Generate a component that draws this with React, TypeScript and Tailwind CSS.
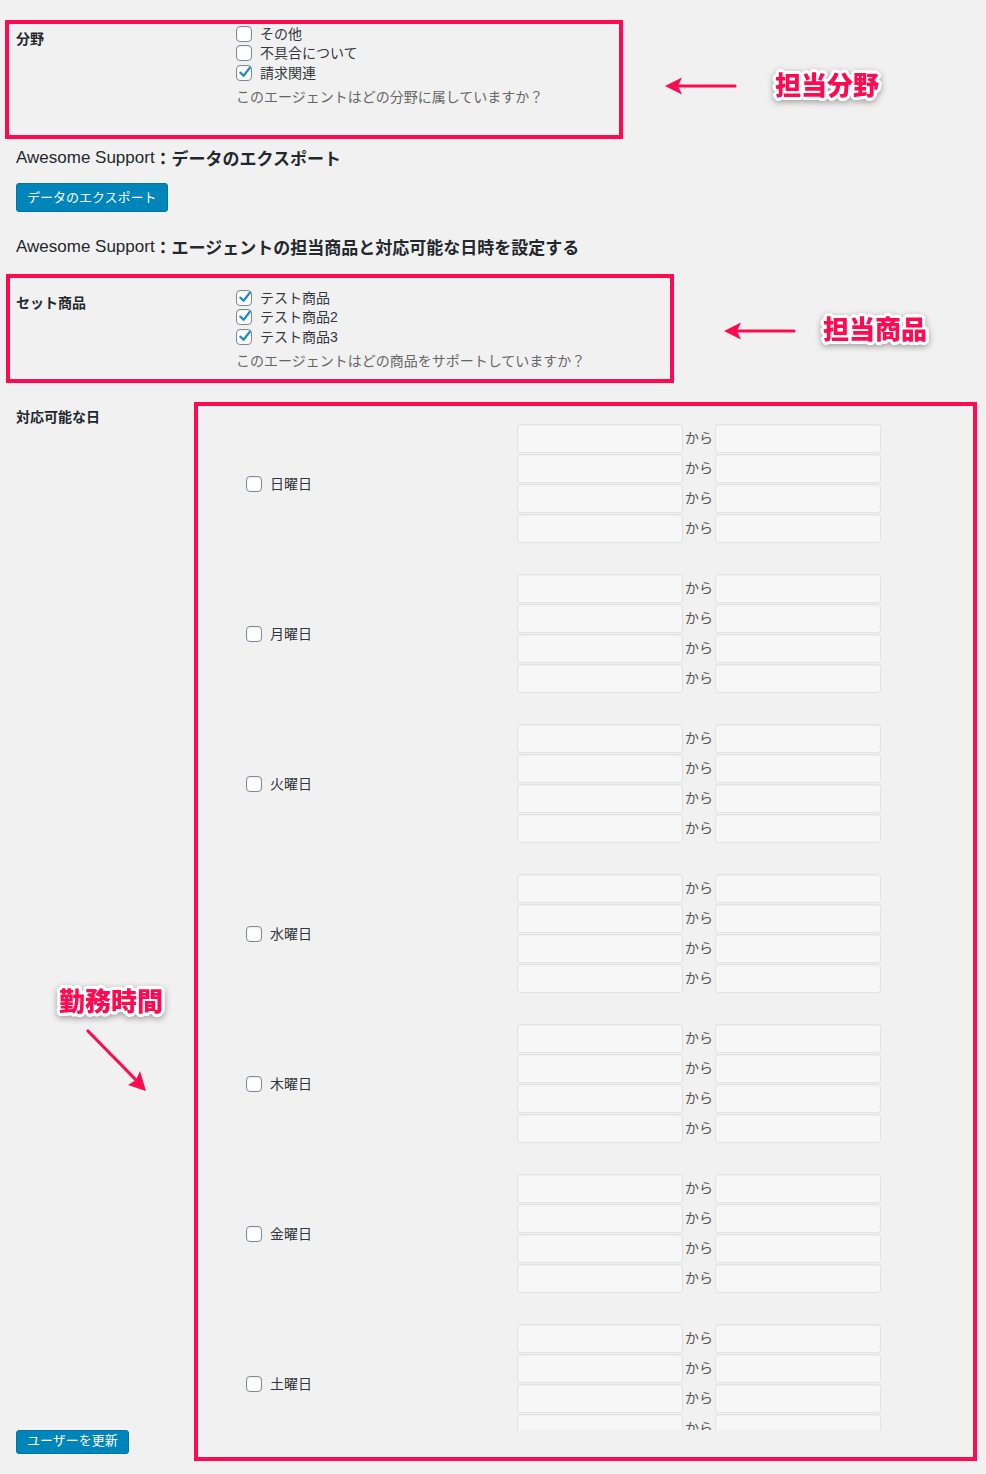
import React from "react";

const days = ["日曜日", "月曜日", "火曜日", "水曜日", "木曜日", "金曜日", "土曜日"];

function Check({ checked }: { checked?: boolean }) {
  return (
    <span className="relative inline-flex h-4 w-4 shrink-0 items-center justify-center rounded-[4px] border border-[#7e8993] bg-white shadow-[inset_0_1px_2px_rgba(0,0,0,0.08)]">
      {checked && (
        <svg viewBox="0 0 16 16" className="absolute left-[0px] top-[-2px] h-[16px] w-[16px]">
          <path
            d="M3.4 8.6 L6.6 11.8 L12.9 3.6"
            stroke="#1e8cbe"
            strokeWidth="2.3"
            fill="none"
            strokeLinecap="round"
            strokeLinejoin="round"
          />
        </svg>
      )}
    </span>
  );
}

function CheckRow({ label, checked }: { label: string; checked?: boolean }) {
  return (
    <div className="flex h-[19.5px] items-center gap-2 text-[14px] leading-5 text-[#32373c]">
      <Check checked={checked} />
      <span>{label}</span>
    </div>
  );
}

function TimeInput() {
  return (
    <div className="h-[29px] w-[166px] rounded-[3px] border border-[#e2e2e2] bg-[#f7f7f7] shadow-[inset_0_1px_2px_rgba(0,0,0,0.04)]" />
  );
}

function DayBlock({ day }: { day: string }) {
  return (
    <div className="mb-[30px] flex h-[120px] shrink-0">
      <div className="flex w-[319px] items-center gap-2 pl-[48px] text-[14px] leading-5 text-[#32373c]">
        <Check />
        <span>{day}</span>
      </div>
      <div className="flex flex-col">
        {[0, 1, 2, 3].map((i) => (
          <div key={i} className="flex h-[30px] items-start">
            <TimeInput />
            <span className="flex h-[29px] w-[32px] items-center justify-center text-[14px] text-[#555]">から</span>
            <TimeInput />
          </div>
        ))}
      </div>
    </div>
  );
}

const noteText =
  "absolute font-['Noto_Sans_CJK_JP',sans-serif] text-[26px] font-black leading-[32px] text-[#ff0a50] [text-shadow:3px_0_0_#fff,-3px_0_0_#fff,0_3px_0_#fff,0_-3px_0_#fff,2px_2px_0_#fff,-2px_2px_0_#fff,2px_-2px_0_#fff,-2px_-2px_0_#fff,3px_1px_0_#fff,-3px_1px_0_#fff,3px_-1px_0_#fff,-3px_-1px_0_#fff,1px_3px_0_#fff,-1px_3px_0_#fff,1px_-3px_0_#fff,-1px_-3px_0_#fff] drop-shadow-[0_2px_3px_rgba(0,0,0,0.35)]";

function LeftArrow({ className }: { className: string }) {
  return (
    <svg className={className} viewBox="0 0 74 22" width="74" height="22">
      <path d="M14 11 H71" stroke="#ff0a50" strokeWidth="3.2" strokeLinecap="round" />
      <path d="M1 11 L18 2.5 L14 11 L18 19.5 Z" fill="#ff0a50" />
    </svg>
  );
}

export default function App() {
  return (
    <div className="relative h-[1474px] w-[986px] overflow-hidden bg-[#f1f1f1] font-['Liberation_Sans','Noto_Sans_CJK_JP',sans-serif] text-[14px] text-[#23282d]">
      {/* 分野 */}
      <div className="ml-[5px] mt-[20px] h-[119px] w-[618px] border-4 border-[#ff0a50] pl-[7px]">
        <div className="flex">
          <div className="h-5 w-[220px] pt-[5px] text-[14px] font-bold leading-5">分野</div>
          <div className="flex flex-col">
            <CheckRow label="その他" />
            <CheckRow label="不具合について" />
            <CheckRow label="請求関連" checked />
            <div className="mt-[4px] h-5 text-[14px] leading-5 text-[#666]">
              このエージェントはどの分野に属していますか？
            </div>
          </div>
        </div>
      </div>

      <h2 className="ml-[16px] mt-[7px] flex h-[24px] items-center text-[17px] leading-6 text-[#23282d]">
        <span className="font-normal">Awesome Support</span>
        <span className="font-['Noto_Sans_CJK_JP',sans-serif] font-bold">：データのエクスポート</span>
      </h2>

      <button className="ml-[16px] mt-[13px] flex h-[29px] items-center rounded-[3px] border border-[#0073aa] bg-[#0085ba] px-[10px] text-[13px] leading-5 text-white">
        データのエクスポート
      </button>

      <h2 className="ml-[16px] mt-[23px] flex h-[24px] items-center text-[17px] leading-6 text-[#23282d]">
        <span className="font-normal">Awesome Support</span>
        <span className="font-['Noto_Sans_CJK_JP',sans-serif] font-bold">：エージェントの担当商品と対応可能な日時を設定する</span>
      </h2>

      {/* セット商品 */}
      <div className="ml-[6px] mt-[15px] h-[109px] w-[668px] border-4 border-[#ff0a50] pl-[6px] pt-[10px]">
        <div className="flex">
          <div className="h-5 w-[220px] pt-[5px] text-[14px] font-bold leading-5">セット商品</div>
          <div className="flex flex-col">
            <CheckRow label="テスト商品" checked />
            <CheckRow label="テスト商品2" checked />
            <CheckRow label="テスト商品3" checked />
            <div className="mt-[4px] h-5 text-[14px] leading-5 text-[#666]">
              このエージェントはどの商品をサポートしていますか？
            </div>
          </div>
        </div>
      </div>

      {/* 対応可能な日 */}
      <div className="mt-[19px] flex">
        <div className="ml-[16px] flex w-[178px] flex-col justify-between">
          <div className="mt-[5px] h-5 text-[14px] font-bold leading-5">対応可能な日</div>
          <button className="mb-[7px] flex h-[24px] w-fit items-start rounded-[3px] border border-[#0073aa] bg-[#0085ba] px-[10px] pt-[1px] text-[13px] leading-[18px] text-white">
            ユーザーを更新
          </button>
        </div>
        <div className="h-[1059px] w-[783px] border-4 border-[#ff0a50] pt-[18px]">
          <div className="flex h-[1006px] flex-col overflow-hidden">
            {days.map((d) => (
              <DayBlock key={d} day={d} />
            ))}
          </div>
        </div>
      </div>

      {/* annotations */}
      <LeftArrow className="absolute left-[664px] top-[75px]" />
      <div className={`${noteText} left-[775px] top-[68px]`}>担当分野</div>

      <LeftArrow className="absolute left-[723px] top-[320px]" />
      <div className={`${noteText} left-[823px] top-[312px]`}>担当商品</div>

      <div className={`${noteText} left-[59px] top-[984px]`}>勤務時間</div>
      <svg className="absolute left-[82px] top-[1025px]" width="70" height="72" viewBox="0 0 70 72">
        <path d="M6 6 L55 56" stroke="#ff0a50" strokeWidth="3.2" strokeLinecap="round" />
        <path d="M64 66 L46 60 L54 55 L58 46 Z" fill="#ff0a50" />
      </svg>
    </div>
  );
}
